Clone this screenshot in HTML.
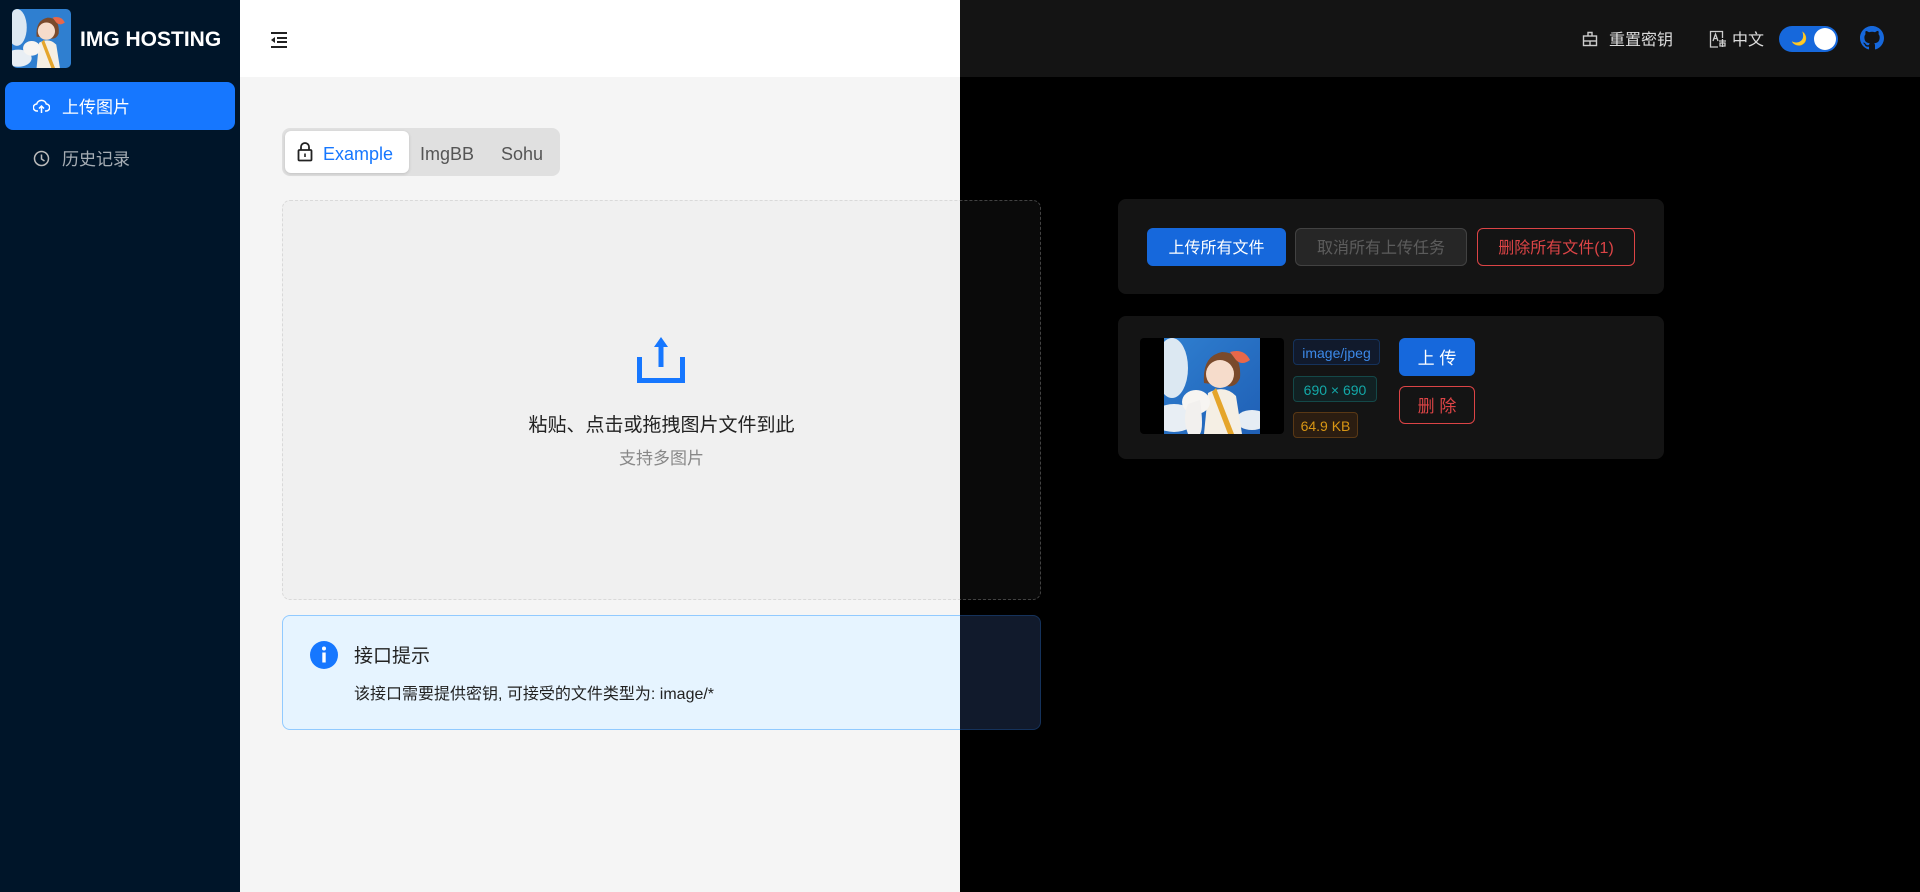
<!DOCTYPE html>
<html><head><meta charset="utf-8"><style>
*{box-sizing:border-box;margin:0;padding:0}
body{width:1920px;height:892px;overflow:hidden;font-family:"Liberation Sans","Noto Sans CJK SC",sans-serif;position:relative}
.layer{position:absolute;left:0;top:0;width:1920px;height:892px}
.light{background:#f5f5f5}
.dark{background:#000;clip-path:inset(0 0 0 960px)}
.hdr{position:absolute;left:240px;top:0;width:1680px;height:77px}
.light .hdr{background:#fff}
.dark .hdr{background:#141414}
.side{position:absolute;left:0;top:0;width:240px;height:892px;background:#001529}
.abs{position:absolute}
.seg{left:282px;top:128px;width:278px;height:48px;border-radius:8px;background:#e0e0e0;padding:3px}
.seg .it{position:absolute;top:5px;height:42px;line-height:42px;font-size:18px;color:#555}
.drop{left:282px;top:200px;width:759px;height:400px;border:1px dashed #d9d9d9;border-radius:8px;background:#f0f0f0}
.dark .drop{border-color:#424242;background:#0a0a0a}
.alert{left:282px;top:615px;width:759px;height:115px;border:1px solid #91caff;border-radius:8px;background:#e6f4ff}
.dark .alert{border-color:#15325b;background:#111a2c}
.card{background:#141414;border-radius:8px}
.btn{position:absolute;height:38px;line-height:40px;border-radius:6px;text-align:center;font-size:16px;border:1px solid transparent}
.tag{position:absolute;height:26px;line-height:26px;border-radius:4px;font-size:14px;text-align:center;border:1px solid}
</style></head><body>

<div class="layer light">
  <div class="hdr"></div>
  <svg class="abs" style="left:270px;top:31px" width="18" height="18" viewBox="0 0 18 18"><g stroke="#222" stroke-width="2"><line x1="1" y1="2" x2="17" y2="2"/><line x1="7" y1="7" x2="17" y2="7"/><line x1="7" y1="11" x2="17" y2="11"/><line x1="1" y1="16" x2="17" y2="16"/></g><path d="M5 6 L1 9 L5 12Z" fill="#222"/></svg>
  <div class="abs seg">
    <div class="abs" style="left:3px;top:3px;width:124px;height:42px;background:#fff;border-radius:6px;box-shadow:0 1px 3px rgba(0,0,0,.15)"></div>
    <svg class="abs" style="left:15px;top:14px" width="16" height="20" viewBox="0 0 16 20"><rect x="1.5" y="8" width="13" height="10.5" rx="1" fill="none" stroke="#222" stroke-width="1.8"/><path d="M4 8V5a4 4 0 0 1 8 0v3" fill="none" stroke="#222" stroke-width="1.8"/><rect x="7.2" y="11.5" width="1.6" height="3.5" fill="#222"/></svg>
    <div class="it" style="left:41px;color:#1677ff">Example</div>
    <div class="it" style="left:138px">ImgBB</div>
    <div class="it" style="left:219px">Sohu</div>
  </div>
  <div class="abs drop"></div>
  <div class="abs alert"></div>
</div>

<div class="layer dark">
  <div class="hdr"></div>
  <div class="abs drop"></div>
  <div class="abs alert"></div>
  <div class="abs card" style="left:1118px;top:199px;width:546px;height:95px"></div>
  <div class="btn" style="left:1147px;top:228px;width:139px;background:#1668dc;color:#fff">上传所有文件</div>
  <div class="btn" style="left:1295px;top:228px;width:172px;background:#262626;border-color:#424242;color:rgba(255,255,255,.25)">取消所有上传任务</div>
  <div class="btn" style="left:1477px;top:228px;width:158px;border-color:#dc4446;color:#dc4446">删除所有文件(1)</div>
  <div class="abs card" style="left:1118px;top:316px;width:546px;height:143px"></div>
  <div class="abs" style="left:1140px;top:338px;width:144px;height:96px;background:#000;border-radius:4px"></div>
  <svg class="abs" style="left:1164px;top:338px" width="96" height="96" viewBox="0 0 96 96">
    <defs><linearGradient id="sky" x1="0" y1="0" x2="1" y2="1"><stop offset="0" stop-color="#2f7fd0"/><stop offset="1" stop-color="#1f5fb5"/></linearGradient></defs>
    <rect width="96" height="96" fill="url(#sky)"/>
    <ellipse cx="8" cy="30" rx="16" ry="30" fill="#dce8f2"/>
    <ellipse cx="10" cy="80" rx="22" ry="14" fill="#e8eef4"/>
    <ellipse cx="88" cy="82" rx="16" ry="10" fill="#e6edf4"/>
    <path d="M40 45 Q38 18 58 14 Q78 14 76 40 Q72 50 62 48Z" fill="#7a4a2c"/>
    <ellipse cx="56" cy="36" rx="14" ry="14" fill="#f6dccb"/>
    <path d="M66 14 Q80 10 86 22 Q78 28 72 22Z" fill="#e8684a"/>
    <path d="M44 55 Q60 46 72 58 L78 96 L40 96Z" fill="#f5efe4"/>
    <ellipse cx="32" cy="64" rx="14" ry="12" fill="#f7f5f2"/>
    <path d="M36 62 Q40 90 36 96 L24 96 Q18 80 24 66Z" fill="#f2f0ee"/>
    <path d="M52 50 L70 96 L64 96 L48 54Z" fill="#e5a52a"/>
  </svg>
  <div class="tag" style="left:1293px;top:339px;width:87px;background:#111a2c;border-color:#15325b;color:#3c89e8">image/jpeg</div>
  <div class="tag" style="left:1293px;top:376px;width:84px;background:#112123;border-color:#144848;color:#13a8a8">690 × 690</div>
  <div class="tag" style="left:1293px;top:412px;width:65px;background:#2b1d11;border-color:#593815;color:#d89614">64.9 KB</div>
  <div class="btn" style="left:1399px;top:338px;width:76px;background:#1668dc;color:#fff;font-size:17px">上 传</div>
  <div class="btn" style="left:1399px;top:386px;width:76px;border-color:#dc4446;color:#dc4446;font-size:17px">删 除</div>
  <svg class="abs" style="left:1582px;top:31px" width="16" height="16" viewBox="0 0 16 16"><g fill="none" stroke="#ccc" stroke-width="1.4"><path d="M6 5V1.5h4V5"/><rect x="1.5" y="5" width="13" height="9.5"/><line x1="1.5" y1="10" x2="14.5" y2="10"/><line x1="8" y1="10" x2="8" y2="14"/></g></svg>
  <div class="abs" style="left:1609px;top:29px;font-size:16px;line-height:24px;color:rgba(255,255,255,.85)">重置密钥</div>
  <svg class="abs" style="left:1709px;top:30px" width="18" height="18" viewBox="0 0 18 18"><g fill="none" stroke="#ccc" stroke-width="1.3"><path d="M9 17H1.5V1.5h12V8"/><path d="M4 11l2.5-7 2.5 7M5 8.5h3"/><path d="M10 11h7M13.5 9v8M11 13h5v3h-5z"/></g></svg>
  <div class="abs" style="left:1732px;top:29px;font-size:16px;line-height:24px;color:rgba(255,255,255,.85)">中文</div>
  <div class="abs" style="left:1779px;top:26px;width:59px;height:26px;border-radius:13px;background:#1668dc"></div>
  <div class="abs" style="left:1791px;top:30px;font-size:13px;line-height:18px;color:#f5c518">🌙</div>
  <div class="abs" style="left:1814px;top:28px;width:22px;height:22px;border-radius:50%;background:#fff"></div>
  <svg class="abs" style="left:1860px;top:26px" width="24" height="24" viewBox="0 0 16 16"><path fill="#1668dc" d="M8 0C3.58 0 0 3.58 0 8c0 3.54 2.29 6.53 5.47 7.59.4.07.55-.17.55-.38 0-.19-.01-.82-.01-1.49-2.01.37-2.53-.49-2.69-.94-.09-.23-.48-.94-.82-1.13-.28-.15-.68-.52-.01-.53.63-.01 1.08.58 1.23.82.72 1.21 1.87.87 2.33.66.07-.52.28-.87.51-1.07-1.78-.2-3.64-.89-3.64-3.95 0-.87.31-1.59.82-2.15-.08-.2-.36-1.02.08-2.12 0 0 .67-.21 2.2.82.64-.18 1.32-.27 2-.27.68 0 1.36.09 2 .27 1.53-1.04 2.2-.82 2.2-.82.44 1.1.16 1.92.08 2.12.51.56.82 1.27.82 2.15 0 3.07-1.87 3.75-3.65 3.95.29.25.54.73.54 1.48 0 1.07-.01 1.93-.01 2.2 0 .21.15.46.55.38A8.013 8.013 0 0016 8c0-4.42-3.58-8-8-8z"/></svg>
</div>

<svg class="abs" style="left:637px;top:337px" width="48" height="46" viewBox="0 0 48 46"><path d="M24 0 L31 10 H26.5 V30 H21.5 V10 H17Z" fill="#1677ff"/><path d="M2.5 20 V43.5 H45.5 V20" fill="none" stroke="#1677ff" stroke-width="5"/></svg>
<div class="abs" style="left:282px;top:413px;width:759px;text-align:center;font-size:19px;line-height:26px;color:#222">粘贴、点击或拖拽图片文件到此</div>
<div class="abs" style="left:282px;top:448px;width:759px;text-align:center;font-size:17px;line-height:22px;color:#888">支持多图片</div>
<svg class="abs" style="left:310px;top:641px" width="28" height="28" viewBox="0 0 28 28"><circle cx="14" cy="14" r="14" fill="#1677ff"/><rect x="12.3" y="11.5" width="3.4" height="10" fill="#fff"/><circle cx="14" cy="7.5" r="2" fill="#fff"/></svg>
<div class="abs" style="left:354px;top:644px;font-size:19px;line-height:26px;color:#222">接口提示</div>
<div class="abs" style="left:354px;top:684px;font-size:16px;line-height:22px;color:#222">该接口需要提供密钥, 可接受的文件类型为: image/*</div>

<div class="side">
  <svg class="abs" style="left:12px;top:9px" width="59" height="59" viewBox="0 0 96 96"><defs><clipPath id="c"><rect width="96" height="96" rx="8"/></clipPath></defs><g clip-path="url(#c)"><rect width="96" height="96" fill="#2f7fd0"/><ellipse cx="8" cy="30" rx="16" ry="30" fill="#dce8f2"/><ellipse cx="10" cy="80" rx="22" ry="14" fill="#e8eef4"/><path d="M40 45 Q38 18 58 14 Q78 14 76 40 Q72 50 62 48Z" fill="#7a4a2c"/><ellipse cx="56" cy="36" rx="14" ry="14" fill="#f6dccb"/><path d="M66 14 Q80 10 86 22 Q78 28 72 22Z" fill="#e8684a"/><path d="M44 55 Q60 46 72 58 L78 96 L40 96Z" fill="#f5efe4"/><ellipse cx="32" cy="64" rx="14" ry="12" fill="#f7f5f2"/><path d="M52 50 L70 96 L64 96 L48 54Z" fill="#e5a52a"/></g></svg>
  <div class="abs" style="left:80px;top:26px;font-size:21px;font-weight:bold;color:#fff;line-height:28px">IMG HOSTING</div>
  <div class="abs" style="left:5px;top:82px;width:230px;height:48px;border-radius:8px;background:#1677ff"></div>
  <svg class="abs" style="left:33px;top:98px" width="17" height="17" viewBox="0 0 17 17"><g fill="none" stroke="#fff" stroke-width="1.5"><path d="M5 13H4a3.5 3.5 0 0 1-.3-7A5 5 0 0 1 13.3 6 3.5 3.5 0 0 1 13 13h-1"/><path d="M8.5 15V8M6 10.5l2.5-2.5 2.5 2.5"/></g></svg>
  <div class="abs" style="left:62px;top:96px;font-size:17px;line-height:24px;color:#fff">上传图片</div>
  <svg class="abs" style="left:33px;top:150px" width="17" height="17" viewBox="0 0 17 17"><g fill="none" stroke="#bbb" stroke-width="1.5"><circle cx="8.5" cy="8.5" r="7"/><path d="M8.5 4.5V9l3 2"/></g></svg>
  <div class="abs" style="left:62px;top:148px;font-size:17px;line-height:24px;color:rgba(255,255,255,.65)">历史记录</div>
</div>
</body></html>
